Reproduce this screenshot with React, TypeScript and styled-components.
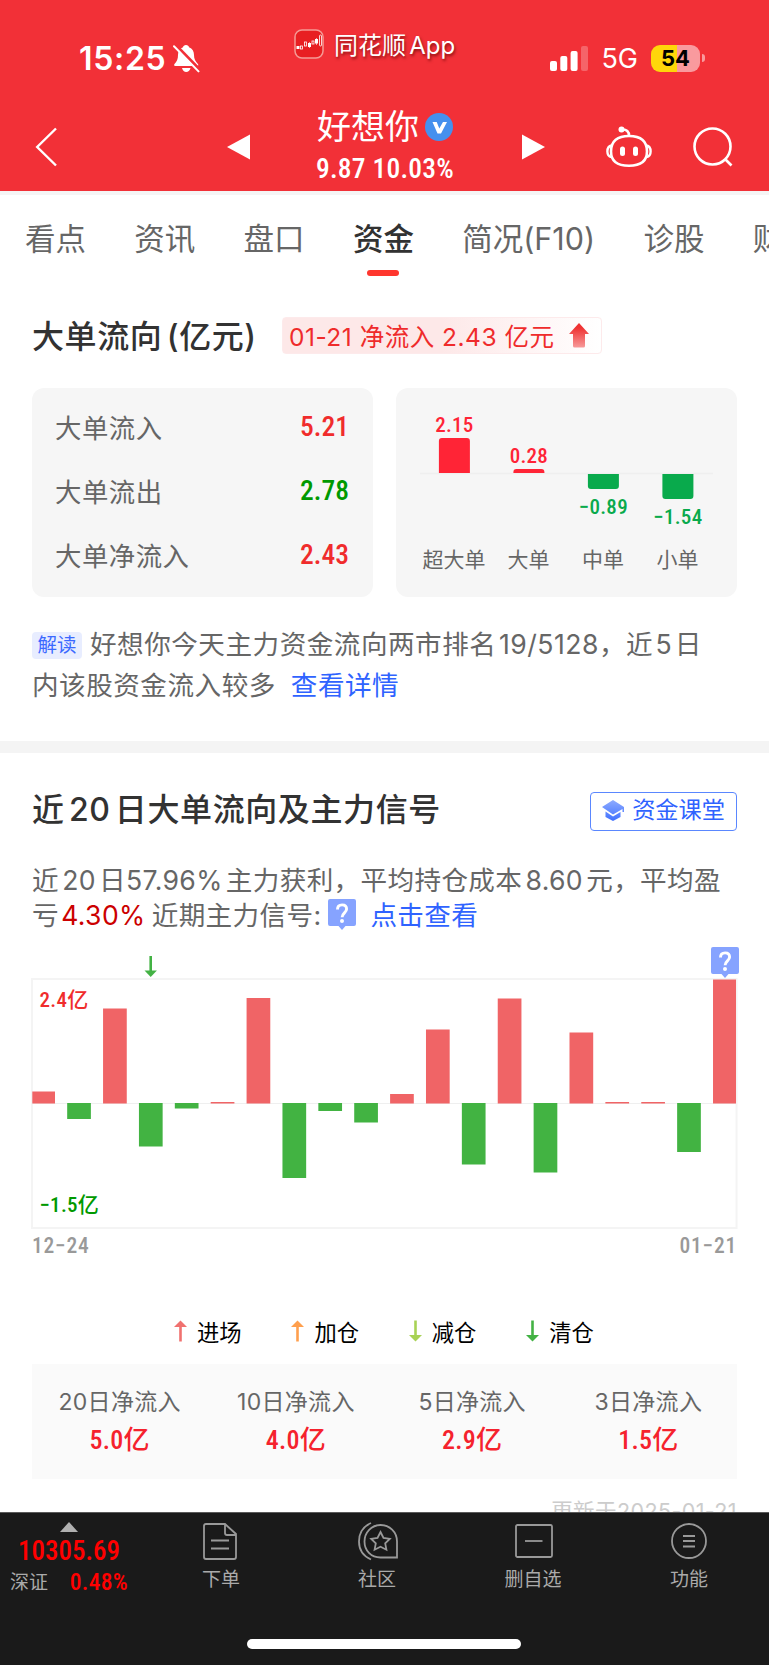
import styled, { createGlobalStyle, css } from 'styled-components';

const GlobalStyle = createGlobalStyle`
  * {
    box-sizing: border-box;
  }

  body {
    margin: 0;
    background-color: #fff;
    font-family: Inter, 'Noto Sans CJK SC', sans-serif;
    color: #666;
  }

  svg {
    display: block;
    flex-shrink: 0;
  }
`;

const numberFont = css`
  font-family: Roboto, 'Noto Sans CJK SC', sans-serif;
  font-stretch: 85%;
`;

const StyledPage = styled.div`
  width: 769px;
  height: 1665px;
  overflow: hidden;
  display: flex;
  flex-direction: column;
  background-color: #fff;
`;

/* header */

const StyledHeader = styled.header`
  height: 195px;
  flex-shrink: 0;
  background-color: #f23037;
  border-bottom: 4px solid #f5f5f5;
  color: #fff;
`;

const StyledStatusBar = styled.div`
  height: 95px;
  padding: 20px 64px 0 79px;
  display: grid;
  grid-template-columns: 215px 1fr auto;
`;

const StyledClock = styled.div`
  height: 76px;
  display: flex;
  align-items: center;
  gap: 7px;
  font-size: 32px;
  font-weight: 600;
  letter-spacing: 0.7px;
`;

const StyledAppMark = styled.div`
  height: 48px;
  display: flex;
  align-items: center;
  gap: 10px;
  font-size: 24px;
  text-shadow: 1px 2px 3px rgba(90, 0, 0, 0.7);
  word-spacing: -3.5px;
  white-space: nowrap;

  > span {
    margin-top: -2px;
  }
`;

const StyledSignal = styled.div`
  height: 76px;
  display: flex;
  align-items: center;
  font-size: 27px;
  gap: 13px;
`;

const StyledBattery = styled.div`
  display: flex;
  align-items: center;
  gap: 2px;

  > span {
    width: 49px;
    height: 27px;
    border-radius: 9px;
    background: linear-gradient(90deg, #ffd60a 54%, #f99a9e 54%);
    color: #000;
    font-size: 22px;
    font-weight: 700;
    line-height: 27px;
    text-align: center;
  }

  &::after {
    content: '';
    width: 3px;
    height: 8px;
    border-radius: 0 3px 3px 0;
    background-color: #f99a9e;
  }
`;

const StyledNav = styled.nav`
  height: 96px;
  padding: 8px 35px 0 35px;
  display: flex;
  align-items: center;
`;

const StyledStock = styled.div`
  width: 272px;
  height: 88px;
  padding-right: 2px;
  display: flex;
  flex-direction: column;
  align-items: center;
`;

const StyledStockName = styled.div`
  height: 48px;
  display: flex;
  align-items: center;
  gap: 6px;
  font-size: 34px;
  line-height: 48px;
`;

const StyledStockPrice = styled.div`
  ${numberFont}
  font-size: 27.5px;
  font-weight: 500;
  line-height: 36px;
  letter-spacing: 0.25px;
`;

const StyledSpacer = styled.div<{ $width: number }>`
  width: ${({ $width }) => $width}px;
  flex-shrink: 0;
`;

/* tabs */

const StyledTabs = styled.div`
  height: 90px;
  padding-left: 25px;
  display: flex;
  column-gap: 48.3px;
  overflow: hidden;
  flex-shrink: 0;
`;

const StyledTab = styled.div<{ $active?: boolean }>`
  flex-shrink: 0;
  display: flex;
  flex-direction: column;
  align-items: center;
  padding-top: 22px;
  font-size: 30.5px;
  line-height: 44px;
  white-space: nowrap;

  ${({ $active }) =>
    $active &&
    css`
      color: #323232;
      font-weight: 500;

      &::after {
        content: '';
        width: 32px;
        height: 6px;
        margin-top: 9px;
        border-radius: 3px;
        background-color: #ff362e;
      }
    `}
`;

/* big order flow */

const StyledSection = styled.section`
  padding: 0 32px;
  flex-shrink: 0;
`;

const StyledTitleRow = styled.div<{ $height: number; $bottom: number }>`
  height: ${({ $height }) => $height}px;
  margin-bottom: ${({ $bottom }) => $bottom}px;
  display: flex;
  align-items: center;
`;

const StyledTitle = styled.h2`
  margin: 0 0 3px;
  color: #323232;
  font-size: 32px;
  font-weight: 500;
  letter-spacing: 0.6px;
  word-spacing: -4.8px;
  white-space: nowrap;
`;

const StyledFlowBadge = styled.div`
  height: 37px;
  width: 320px;
  margin-left: auto;
  margin-right: 135px;
  padding: 0 12px 0 6px;
  display: flex;
  align-items: center;
  justify-content: space-between;
  border: 1px solid #fdeaeb;
  border-radius: 4px;
  background: linear-gradient(90deg, #fde8e8 50%, #fff);
  color: #ef2b2b;
  font-size: 24.5px;
  letter-spacing: 0.5px;
  white-space: nowrap;
`;

const StyledCards = styled.div`
  display: grid;
  grid-template-columns: 1fr 1fr;
  column-gap: 23px;
`;

const StyledCard = styled.div`
  height: 209px;
  border-radius: 12px;
  background-color: #f6f6f6;
`;

const StyledFlowList = styled.div`
  padding: 6px 24px 0 23px;
`;

const StyledFlowRow = styled.div`
  height: 64.4px;
  display: flex;
  align-items: center;
  justify-content: space-between;
  font-size: 26.4px;
  letter-spacing: 0.5px;
`;

const StyledFlowValue = styled.span<{ $down?: boolean }>`
  ${numberFont}
  color: ${({ $down }) => ($down ? '#009900' : '#f02c2c')};
  font-size: 27.5px;
  font-weight: 500;
  letter-spacing: 0;
`;

const StyledInsight = styled.p`
  margin: 27px 0 0;
  height: 117px;
  font-size: 26.6px;
  line-height: 41px;
  letter-spacing: 0.5px;
  word-spacing: -5.5px;
  white-space: nowrap;
`;

const StyledTag = styled.span`
  display: inline-block;
  width: 50px;
  height: 27px;
  margin-right: 8px;
  border-radius: 4px;
  background-color: #e8edff;
  color: #3b69ff;
  font-size: 19.5px;
  line-height: 27px;
  letter-spacing: 0;
  text-align: center;
  vertical-align: 2px;
`;

const StyledLink = styled.a<{ $gap: number }>`
  margin-left: ${({ $gap }) => $gap}px;
  color: #2f63ff;
`;

const StyledDivider = styled.div`
  height: 12px;
  flex-shrink: 0;
  background-color: #f4f4f4;
`;

/* 20 day signals */

const StyledLesson = styled.div`
  width: 147px;
  height: 39px;
  margin-left: auto;
  margin-top: 6px;
  display: flex;
  align-items: center;
  justify-content: center;
  gap: 8px;
  border: 1.5px solid #5a87ff;
  border-radius: 4px;
  color: #2f63ff;
  font-size: 23.2px;
  line-height: 32px;
  padding-bottom: 2px;
  white-space: nowrap;
`;

const StyledSummary = styled.p`
  margin: 0;
  height: 79px;
  font-size: 26.6px;
  line-height: 35px;
  letter-spacing: 0.35px;
  word-spacing: -4.6px;
  white-space: nowrap;

  > b {
    margin: 0 3px 0 -1px;
    color: #cc0000;
    font-weight: 400;
  }

  svg {
    display: inline-block;
    margin-left: 7px;
    vertical-align: -5px;
  }
`;

const StyledChart = styled.div`
  margin: 0 -8px;
  height: 289px;
`;

const StyledDates = styled.div`
  display: flex;
  justify-content: space-between;
  height: 67px;
  ${numberFont}
  color: #999;
  font-size: 21.5px;
  font-weight: 500;
  line-height: 30px;
  letter-spacing: 0.8px;
`;

const StyledLegend = styled.div`
  height: 66px;
  padding-left: 142px;
  display: flex;
  align-items: center;
`;

const StyledLegendItem = styled.div`
  width: 117.4px;
  display: flex;
  align-items: center;
  gap: 10px;
  color: #000;
  font-size: 22.3px;
`;

const StyledTotals = styled.div`
  height: 115px;
  padding-top: 20px;
  display: grid;
  grid-template-columns: repeat(4, 1fr);
  background-color: #fafafa;
`;

const StyledTotal = styled.div`
  display: flex;
  flex-direction: column;
  align-items: center;
  padding-right: 1px;
  font-size: 23px;
  line-height: 36px;
  letter-spacing: 0.3px;

  > strong {
    ${numberFont}
    color: #f5222d;
    font-size: 26px;
    font-weight: 500;
    line-height: 41px;
  }
`;

const StyledUpdated = styled.div`
  height: 33px;
  padding-top: 16px;
  overflow: hidden;
  color: #ccc;
  font-size: 21.5px;
  line-height: 32px;
  letter-spacing: 0.4px;
  text-align: right;
`;

/* bottom bar */

const StyledFooter = styled.footer`
  flex: 1;
  display: flex;
  flex-direction: column;
  justify-content: space-between;
  align-items: center;
  padding-bottom: 16px;
  background-color: #1a1a1a;
  border-top: 1px solid #5a5a5a;
  color: #aaa;
  font-size: 19px;
`;

const StyledFooterRow = styled.div`
  width: 100%;
  display: grid;
  grid-template-columns: 143px repeat(4, 156px);
`;

const StyledIndex = styled.div`
  padding: 9px 15px 0 10px;
  display: flex;
  flex-direction: column;
  align-items: center;
`;

const StyledIndexValue = styled.div`
  ${numberFont}
  color: #ff0000;
  font-size: 27px;
  font-weight: 500;
  line-height: 38px;
`;

const StyledIndexRow = styled.div`
  width: 100%;
  display: flex;
  justify-content: space-between;
  align-items: center;
  line-height: 25px;

  > span:last-child {
    ${numberFont}
    color: #ff0000;
    font-size: 23.5px;
    font-weight: 500;
    letter-spacing: 0.3px;
  }
`;

const StyledFooterItem = styled.div`
  display: flex;
  flex-direction: column;
  align-items: center;
  padding-top: 8px;
  line-height: 37px;
`;

const StyledHomeIndicator = styled.div`
  width: 274px;
  height: 10px;
  margin-right: 1px;
  border-radius: 5px;
  background-color: #fff;
`;

type Signal = 'up' | 'down';

const ORDERS = [
  { name: '超大单', value: '2.15', height: 35 },
  { name: '大单', value: '0.28', height: 4 },
  { name: '中单', value: '−0.89', height: -15 },
  { name: '小单', value: '−1.54', height: -25 },
];

// bar heights in px, negative values go below the zero line
const DAYS = [
  12, -16, 95, -43.5, -5.5, 1.5, 105.5, -75, -8, -19.5,
  9.5, 74, -61.5, 105, -69.5, 71, 1.5, 1.5, -49, 124,
];

const LEGEND: { name: string; color: string; signal: Signal }[] = [
  { name: '进场', color: '#f0716f', signal: 'up' },
  { name: '加仓', color: '#ff9f4d', signal: 'up' },
  { name: '减仓', color: '#a8d255', signal: 'down' },
  { name: '清仓', color: '#43b244', signal: 'down' },
];

const TOTALS = [
  { name: '20日净流入', value: '5.0亿' },
  { name: '10日净流入', value: '4.0亿' },
  { name: '5日净流入', value: '2.9亿' },
  { name: '3日净流入', value: '1.5亿' },
];

const StyledChartNumber = styled.text`
  ${numberFont}
  font-size: 21px;
  font-weight: 500;
  letter-spacing: 0.3px;
`;

function BellOff() {
  return (
    <svg width="27" height="29" viewBox="0 0 27 29">
      <path
        d="M13 1c-1.7 0-2.7 1-3 2.2C6.5 4.5 5 7.5 5 11c0 4-1 6.5-3.5 9-.8 1-.4 2 .9 2h21.6c1.3 0 1.7-1 .9-2-2.5-2.5-3.9-5-3.9-9 0-3.5-1.5-6.5-5-7.8C15.7 2 14.7 1 13 1z"
        fill="#fff"
      />
      <path d="M9 24h8.5c-.7 2.8-2.3 4-4.3 4s-3.5-1.2-4.2-4z" fill="#fff" />
      <path d="M2.5.8 27 26" stroke="#f23037" strokeWidth="3" />
      <path d="M1 2.2 25.5 27.4" stroke="#fff" strokeWidth="2" strokeLinecap="round" />
    </svg>
  );
}

function AppLogo() {
  return (
    <svg width="30" height="30" viewBox="0 0 30 30">
      <rect x="1" y="1" width="28" height="28" rx="7" fill="#e81f22" stroke="#f59a95" strokeWidth="1.5" />
      <g fill="#fff">
        <rect x="2.5" y="17" width="3" height="3" />
        <rect x="14" y="14" width="3" height="4" />
        <rect x="21" y="10" width="3" height="4.5" />
        <path d="M22.5 9v7M15.5 13v6" stroke="#fff" strokeWidth=".6" />
      </g>
      <g fill="none" stroke="#fff" strokeWidth=".8">
        <rect x="6.5" y="17" width="2" height="3" />
        <rect x="10.5" y="13" width="2" height="4" />
        <rect x="18" y="12" width="2" height="3" />
        <rect x="25.5" y="6" width="2" height="11" rx="1" />
      </g>
    </svg>
  );
}

function SignalBars() {
  return (
    <svg width="38" height="25" viewBox="0 0 38 25" fill="#fff">
      <rect x="0" y="15" width="7" height="10" rx="2" />
      <rect x="10.3" y="10" width="7" height="15" rx="2" />
      <rect x="20.6" y="5" width="7" height="20" rx="2" />
      <rect x="31" y="0" width="7" height="25" rx="2" opacity=".25" />
    </svg>
  );
}

function Robot() {
  return (
    <svg width="46" height="42" viewBox="0 0 46 42" fill="none" stroke="#fff" strokeWidth="2.6">
      <path d="M23 10c11.5 0 18 5 18 15.5 0 9.5-6 14.2-18 14.2S5 35 5 25.5C5 15 11.5 10 23 10z" />
      <path
        d="M5.5 19.5C2.5 20 1.4 22.5 1.4 25.5s1.1 5 4.1 5.7M40.5 19.5c3 .5 4.1 3 4.1 6s-1.1 5-4.1 5.7"
        strokeWidth="2.4"
      />
      <path d="M23 10c.3-4.5-2.5-6.8-7-6.5" />
      <circle cx="15.5" cy="3.6" r="3" fill="#fff" stroke="none" />
      <rect x="14" y="20.5" width="5" height="9.5" rx="2.5" fill="#fff" stroke="none" />
      <rect x="27" y="20.5" width="5" height="9.5" rx="2.5" fill="#fff" stroke="none" />
    </svg>
  );
}

function SignalArrow({ color, signal }: { color: string; signal: Signal }) {
  return (
    <svg width="13" height="22" viewBox="0 0 13 22">
      <g transform={signal === 'up' ? undefined : 'rotate(180 6.5 11)'}>
        <path d="M6.5 5v16.5" stroke={color} strokeWidth="2.6" />
        <path d="M6.5.5 13 7H0z" fill={color} />
      </g>
    </svg>
  );
}

function QuestionMark() {
  return (
    <>
      <path
        d="M2 0h24a2 2 0 0 1 2 2v23a2 2 0 0 1-2 2h-8.5L14 31l-3.5-4H2a2 2 0 0 1-2-2V2a2 2 0 0 1 2-2z"
        fill="#86a3ff"
      />
      <path
        d="M9.5 10.5c0-3 1.9-4.600 4.6-4.600s4.5 1.600 4.5 4.200c0 3.7-4.5 4-4.5 8.200"
        fill="none"
        stroke="#fff"
        strokeWidth="2.9"
      />
      <circle cx="14" cy="22" r="2" fill="#fff" />
    </>
  );
}

function OrderChart() {
  return (
    <svg width="341" height="209" viewBox="0 0 341 209">
      <path d="M24 85.5h293" stroke="#efefef" strokeWidth="1.5" />
      {ORDERS.map(({ name, value, height }, i) => {
        const x = 58.4 + i * 74.5;
        const up = height > 0;
        const h = Math.abs(height);
        const color = up ? '#ff2436' : '#09aa4c';
        return (
          <g key={name} textAnchor="middle">
            <path
              d={`M${x - 15.5} 0v${h - 3}q0 3 3 3h25q3 0 3-3V0z`}
              transform={up ? 'translate(0 85) scale(1 -1)' : 'translate(0 86)'}
              fill={color}
            />
            <StyledChartNumber x={x} y={up ? 79 - h : 111 + h} fill={color}>
              {value}
            </StyledChartNumber>
            <text x={x - 0.4} y="179" fontSize="21" fill="#666">
              {name}
            </text>
          </g>
        );
      })}
    </svg>
  );
}

function DailyChart() {
  return (
    <svg width="721" height="289" viewBox="24 942 721 289">
      <rect x="32" y="979" width="704.5" height="249" fill="none" stroke="#f4f4f4" strokeWidth="2" />
      <path d="M32 1103.5h704" stroke="#efefef" />
      {DAYS.map((value, i) => {
        const start = 31.3 + i * 35.88;
        const left = Math.max(start, 32.3);
        const right = Math.min(start + 23.7, 736);
        return (
          <rect
            key={i}
            x={left}
            y={value > 0 ? 1103.5 - value : 1103}
            width={right - left}
            height={Math.abs(value)}
            fill={value > 0 ? '#f06466' : '#42b342'}
          />
        );
      })}
      <StyledChartNumber x="39.5" y="1007" fill="#f02c2c">
        2.4亿
      </StyledChartNumber>
      <StyledChartNumber x="39.5" y="1212" fill="#009900">
        −1.5亿
      </StyledChartNumber>
      <path d="M150.7 956v17" stroke="#43b244" strokeWidth="2.6" />
      <path d="M144.5 970.5h12.4l-6.2 6.5z" fill="#43b244" />
      <g transform="translate(711 947)">
        <QuestionMark />
      </g>
    </svg>
  );
}

function App() {
  return (
    <StyledPage>
      <GlobalStyle />
      <StyledHeader>
        <StyledStatusBar>
          <StyledClock>
            15:25
            <BellOff />
          </StyledClock>
          <StyledAppMark>
            <AppLogo />
            <span>同花顺 App</span>
          </StyledAppMark>
          <StyledSignal>
            <SignalBars />
            5G
            <StyledBattery>
              <span>54</span>
            </StyledBattery>
          </StyledSignal>
        </StyledStatusBar>
        <StyledNav>
          <svg width="22" height="40" viewBox="0 0 22 40" fill="none" stroke="#fff" strokeWidth="2.4">
            <path d="M21 1.5 2.2 20 21 38.5" />
          </svg>
          <StyledSpacer $width={170} />
          <svg width="23" height="26" viewBox="0 0 23 26" fill="#fff">
            <path d="M23 .5v25L0 13z" />
          </svg>
          <StyledStock>
            <StyledStockName>
              好想你
              <svg width="28" height="28" viewBox="0 0 28 28">
                <circle cx="14" cy="14" r="14" fill="#4590ee" />
                <path d="M7.5 9h4.2l2.6 6.5L18 9h4l-6 11.5h-3.5z" fill="#fff" />
              </svg>
            </StyledStockName>
            <StyledStockPrice>9.87 10.03%</StyledStockPrice>
          </StyledStock>
          <svg width="23" height="26" viewBox="0 0 23 26" fill="#fff">
            <path d="M0 .5v25L23 13z" />
          </svg>
          <StyledSpacer $width={61} />
          <Robot />
          <StyledSpacer $width={41} />
          <svg width="40" height="40" viewBox="0 0 40 40" fill="none" stroke="#fff" strokeWidth="2.6">
            <circle cx="19.5" cy="19.5" r="18" />
            <path d="m32 32 6.5 6.5" />
          </svg>
        </StyledNav>
      </StyledHeader>

      <StyledTabs>
        <StyledTab>看点</StyledTab>
        <StyledTab>资讯</StyledTab>
        <StyledTab>盘口</StyledTab>
        <StyledTab $active>资金</StyledTab>
        <StyledTab>简况(F10)</StyledTab>
        <StyledTab>诊股</StyledTab>
        <StyledTab>财务</StyledTab>
      </StyledTabs>

      <StyledSection>
        <StyledTitleRow $height={101} $bottom={2}>
          <StyledTitle>大单流向 (亿元)</StyledTitle>
          <StyledFlowBadge>
            01-21 净流入 2.43 亿元
            <svg width="20" height="25" viewBox="0 0 20 25">
              <defs>
                <linearGradient id="inflow" x1="0" y1="0" x2="0" y2="1">
                  <stop offset=".2" stopColor="#ef3333" />
                  <stop offset="1" stopColor="#f79a9a" />
                </linearGradient>
              </defs>
              <path
                d="M10 0 20 11h-4v12a1.5 1.5 0 0 1-1.5 1.5h-9A1.5 1.5 0 0 1 4 23V11H0z"
                fill="url(#inflow)"
              />
            </svg>
          </StyledFlowBadge>
        </StyledTitleRow>
        <StyledCards>
          <StyledCard>
            <StyledFlowList>
              <StyledFlowRow>
                大单流入
                <StyledFlowValue>5.21</StyledFlowValue>
              </StyledFlowRow>
              <StyledFlowRow>
                大单流出
                <StyledFlowValue $down>2.78</StyledFlowValue>
              </StyledFlowRow>
              <StyledFlowRow>
                大单净流入
                <StyledFlowValue>2.43</StyledFlowValue>
              </StyledFlowRow>
            </StyledFlowList>
          </StyledCard>
          <StyledCard>
            <OrderChart />
          </StyledCard>
        </StyledCards>
        <StyledInsight>
          <StyledTag>解读</StyledTag>
          好想你今天主力资金流向两市排名 19/5128，近 5 日
          <br />
          内该股资金流入较多
          <StyledLink $gap={15}>查看详情</StyledLink>
        </StyledInsight>
      </StyledSection>

      <StyledDivider />

      <StyledSection>
        <StyledTitleRow $height={110} $bottom={0}>
          <StyledTitle>近 20 日大单流向及主力信号</StyledTitle>
          <StyledLesson>
            <svg width="22" height="21" viewBox="0 0 22 21">
              <defs>
                <linearGradient id="cap" x1="0" y1="0" x2="0" y2="1">
                  <stop offset="0" stopColor="#8eabff" />
                  <stop offset="1" stopColor="#3f70ff" />
                </linearGradient>
              </defs>
              <path
                d="M11 0 22 7v5h-1.5V9L11 14.5 0 7zM3.5 11.5 11 16.5l7.500-4.500v5L11 21l-7.500-4z"
                fill="url(#cap)"
              />
            </svg>
            资金课堂
          </StyledLesson>
        </StyledTitleRow>
        <StyledSummary>
          近 20 日57.96% 主力获利，平均持仓成本 8.60 元，平均盈
          <br />亏 <b>4.30%</b> 近期主力信号:
          <svg width="28" height="31" viewBox="0 0 28 31">
            <QuestionMark />
          </svg>
          <StyledLink $gap={14}>点击查看</StyledLink>
        </StyledSummary>
        <StyledChart>
          <DailyChart />
        </StyledChart>
        <StyledDates>
          <span>12−24</span>
          <span>01−21</span>
        </StyledDates>
        <StyledLegend>
          {LEGEND.map(({ name, color, signal }) => (
            <StyledLegendItem key={name}>
              <SignalArrow color={color} signal={signal} />
              {name}
            </StyledLegendItem>
          ))}
        </StyledLegend>
        <StyledTotals>
          {TOTALS.map(({ name, value }) => (
            <StyledTotal key={name}>
              {name}
              <strong>{value}</strong>
            </StyledTotal>
          ))}
        </StyledTotals>
        <StyledUpdated>更新于2025-01-21</StyledUpdated>
      </StyledSection>

      <StyledFooter>
        <StyledFooterRow>
          <StyledIndex>
            <svg width="18" height="10" viewBox="0 0 18 10">
              <path d="M9 0 18 10H0z" fill="#b0b0b0" />
            </svg>
            <StyledIndexValue>10305.69</StyledIndexValue>
            <StyledIndexRow>
              <span>深证</span>
              <span>0.48%</span>
            </StyledIndexRow>
          </StyledIndex>
          <StyledFooterItem>
            <svg width="40" height="40" viewBox="0 0 40 40" fill="none" stroke="#999" strokeWidth="1.8">
              <path d="M24 3H5q-2 0-2 2v31q0 2 2 2h28q2 0 2-2V13zv9q0 2 2 2h9M10 19.500h18M10 27.500h18" />
            </svg>
            下单
          </StyledFooterItem>
          <StyledFooterItem>
            <svg width="42" height="40" viewBox="-2 0 42 40" fill="none" stroke="#999" strokeWidth="1.8">
              <path d="M39 36.5H22.5C13 36.5 6.5 29.5 6.5 20.5S13.5 4 22.5 4 39 11 39 20.5zM13 2C5 5.5 1 12.5 1 20.5S5 35 13 38.5" />
              <path d="m22.5 11 3 6 6.3.8-4.6 4.5 1.2 6.4-5.900-3-5.900 3 1.200-6.400-4.600-4.500 6.300-.8z" />
            </svg>
            社区
          </StyledFooterItem>
          <StyledFooterItem>
            <svg width="40" height="40" viewBox="0 0 40 40" fill="none" stroke="#999" strokeWidth="1.8">
              <rect x="3" y="4" width="36" height="32" rx="1.5" />
              <path d="M12 20h17.5" />
            </svg>
            删自选
          </StyledFooterItem>
          <StyledFooterItem>
            <svg width="40" height="40" viewBox="0 0 40 40" fill="none" stroke="#999" strokeWidth="1.8">
              <circle cx="20" cy="20" r="17" />
              <path d="M14 15h12M14 20h12M14 25.5h12" />
            </svg>
            功能
          </StyledFooterItem>
        </StyledFooterRow>
        <StyledHomeIndicator />
      </StyledFooter>
    </StyledPage>
  );
}

export default App;
